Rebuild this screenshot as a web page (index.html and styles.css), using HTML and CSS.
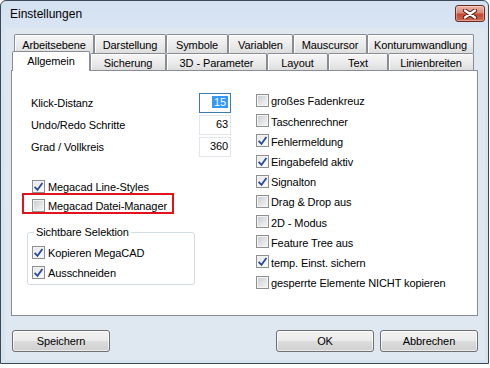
FILE: index.html
```html
<!DOCTYPE html>
<html lang="de">
<head>
<meta charset="utf-8">
<title>Einstellungen</title>
<link rel="stylesheet" href="styles.css">
</head>
<body>
<div class="window">
  <div class="titlebar">
    <span class="title">Einstellungen</span>
    <button class="close" aria-label="Schließen">
      <svg width="16" height="10" viewBox="0 0 16 10"><path d="M3 1.5 L13 8.5 M13 1.5 L3 8.5" stroke="#4a1810" stroke-width="4.2" stroke-linecap="round"/><path d="M3 1.5 L13 8.5 M13 1.5 L3 8.5" stroke="#fff" stroke-width="2.4" stroke-linecap="round"/></svg>
    </button>
  </div>
  <div class="client">
    <div class="tabrow back">
      <div class="tab">Arbeitsebene</div>
      <div class="tab">Darstellung</div>
      <div class="tab">Symbole</div>
      <div class="tab">Variablen</div>
      <div class="tab">Mauscursor</div>
      <div class="tab">Konturumwandlung</div>
    </div>
    <div class="tabrow front">
      <div class="tab active">Allgemein</div>
      <div class="tab">Sicherung</div>
      <div class="tab">3D - Parameter</div>
      <div class="tab">Layout</div>
      <div class="tab">Text</div>
      <div class="tab">Linienbreiten</div>
    </div>
    <div class="panel">
      <div class="left">
        <div class="frow"><span>Klick-Distanz</span><div class="field focus"><span class="sel">15</span></div></div>
        <div class="frow"><span>Undo/Redo Schritte</span><div class="field">63</div></div>
        <div class="frow"><span>Grad / Vollkreis</span><div class="field">360</div></div>
        <div class="cbrow first"><span class="cb on"><svg viewBox="0 0 9 9" width="9" height="9"><path d="M0.6 4.8 L3.5 7.8 L8.4 1" fill="none" stroke="#2b4a9a" stroke-width="1.8"/></svg></span><span class="lbl">Megacad Line-Styles</span></div>
        <div class="redbox"><span class="cb"></span><span class="lbl">Megacad Datei-Manager</span></div>
        <fieldset class="group">
          <legend>Sichtbare Selektion</legend>
          <div class="cbrow"><span class="cb on"><svg viewBox="0 0 9 9" width="9" height="9"><path d="M0.6 4.8 L3.5 7.8 L8.4 1" fill="none" stroke="#2b4a9a" stroke-width="1.8"/></svg></span><span class="lbl">Kopieren MegaCAD</span></div>
          <div class="cbrow"><span class="cb on"><svg viewBox="0 0 9 9" width="9" height="9"><path d="M0.6 4.8 L3.5 7.8 L8.4 1" fill="none" stroke="#2b4a9a" stroke-width="1.8"/></svg></span><span class="lbl">Ausschneiden</span></div>
        </fieldset>
      </div>
      <div class="right">
        <div class="cbrow"><span class="cb"></span><span class="lbl">großes Fadenkreuz</span></div>
        <div class="cbrow"><span class="cb"></span><span class="lbl">Taschenrechner</span></div>
        <div class="cbrow"><span class="cb on"><svg viewBox="0 0 9 9" width="9" height="9"><path d="M0.6 4.8 L3.5 7.8 L8.4 1" fill="none" stroke="#2b4a9a" stroke-width="1.8"/></svg></span><span class="lbl">Fehlermeldung</span></div>
        <div class="cbrow"><span class="cb on"><svg viewBox="0 0 9 9" width="9" height="9"><path d="M0.6 4.8 L3.5 7.8 L8.4 1" fill="none" stroke="#2b4a9a" stroke-width="1.8"/></svg></span><span class="lbl">Eingabefeld aktiv</span></div>
        <div class="cbrow"><span class="cb on"><svg viewBox="0 0 9 9" width="9" height="9"><path d="M0.6 4.8 L3.5 7.8 L8.4 1" fill="none" stroke="#2b4a9a" stroke-width="1.8"/></svg></span><span class="lbl">Signalton</span></div>
        <div class="cbrow"><span class="cb"></span><span class="lbl">Drag &amp; Drop aus</span></div>
        <div class="cbrow"><span class="cb"></span><span class="lbl">2D - Modus</span></div>
        <div class="cbrow"><span class="cb"></span><span class="lbl">Feature Tree aus</span></div>
        <div class="cbrow"><span class="cb on"><svg viewBox="0 0 9 9" width="9" height="9"><path d="M0.6 4.8 L3.5 7.8 L8.4 1" fill="none" stroke="#2b4a9a" stroke-width="1.8"/></svg></span><span class="lbl">temp. Einst. sichern</span></div>
        <div class="cbrow"><span class="cb"></span><span class="lbl">gesperrte Elemente NICHT kopieren</span></div>
      </div>
    </div>
    <div class="buttons">
      <button class="btn save">Speichern</button>
      <button class="btn">OK</button>
      <button class="btn">Abbrechen</button>
    </div>
  </div>
</div>
</body>
</html>
```

FILE: styles.css
```css
* { box-sizing: border-box; }
html, body { margin: 0; padding: 0; background: #fff; }
body {
  font-family: "Liberation Sans", Arial, sans-serif;
  font-size: 11px;
  letter-spacing: -0.1px;
  color: #000;
}
.window {
  width: 489px;
  height: 364px;
  border: 1px solid #3b4857;
  border-radius: 6px 6px 0 0;
  background: linear-gradient(#d3e1f1, #d9e5f3 30px, #d6e2f0);
  display: flex;
  flex-direction: column;
}
.titlebar {
  height: 27px;
  flex: none;
  display: flex;
  justify-content: space-between;
  align-items: flex-start;
  padding: 0 3px 0 9px;
}
.title { font-size: 12px; line-height: 27px; letter-spacing: 0; }
.close {
  margin-top: 4px;
  width: 30px;
  height: 17px;
  padding: 0;
  border: 1px solid #6a2a22;
  border-radius: 3px;
  background: linear-gradient(#eab3a6, #dc8a7a 45%, #c6462f 55%, #cf6a52);
  box-shadow: inset 0 0 0 1px rgba(255,255,255,0.35);
  display: flex;
  align-items: center;
  justify-content: center;
}
.close svg { display: block; }
.client {
  flex: 1;
  margin: 0 3px 3px 4px;
  background: #dfe7f1;
  padding: 6px 7px 8px 6px;
  display: flex;
  flex-direction: column;
}
.tabrow { display: flex; flex: none; }
.tabrow.back { margin-left: 3px; height: 19px; }
.tabrow.front { margin-left: 1px; height: 17px; }
.tab {
  border: 1px solid #898c95;
  border-bottom: none;
  border-radius: 2px 2px 0 0;
  background: linear-gradient(#f6f6f6, #ececec 50%, #dedede);
  box-shadow: inset 1px 1px 0 #fff;
  text-align: center;
  white-space: nowrap;
  line-height: 14px;
}
.back .tab { height: 19px; padding-top: 3px; }
.front .tab { height: 17px; padding-top: 2px; }
.back .tab:nth-child(1) { width: 80px; }
.back .tab:nth-child(2) { width: 72px; }
.back .tab:nth-child(3) { width: 62px; }
.back .tab:nth-child(4) { width: 65px; }
.back .tab:nth-child(5) { width: 74px; }
.back .tab:nth-child(6) { width: 107px; }
.front .tab:nth-child(1) { width: 78px; }
.front .tab:nth-child(2) { width: 76px; }
.front .tab:nth-child(3) { width: 101px; }
.front .tab:nth-child(4) { width: 61px; }
.front .tab:nth-child(5) { width: 60px; }
.front .tab:nth-child(6) { width: 86px; }
.front .tab.active {
  height: 20px;
  margin-top: -2px;
  margin-bottom: -1px;
  background: #fff;
  box-shadow: none;
  position: relative;
  z-index: 1;
}
.panel {
  height: 246px;
  flex: none;
  border: 1px solid #898c95;
  background: #fff;
  display: grid;
  grid-template-columns: 225px 1fr;
  padding-left: 19px;
}
.left { padding-top: 22px; }
.right { padding-top: 19.4px; }
.frow {
  display: grid;
  grid-template-columns: 168px 32px;
  height: 20px;
  margin-bottom: 2px;
  align-items: center;
}
.field {
  height: 20px;
  border: 1px solid #e3e7eb;
  text-align: right;
  padding-right: 2px;
  line-height: 16px;
}
.field.focus { border-color: #3d7bad; }
.sel { background: #3399ff; color: #fff; padding: 0 2px; }
.cbrow {
  display: flex;
  align-items: center;
  gap: 3px;
  height: 20px;
  white-space: nowrap;
}
.left > .cbrow { padding-left: 1px; }
.cbrow.first { margin-top: 19px; }
.right .cbrow { height: 20.2px; gap: 2px; }
.lbl { padding-top: 2px; }
.cb {
  width: 13px;
  height: 13px;
  flex: none;
  border: 1px solid #8e8f8f;
  padding: 1px;
  background: linear-gradient(135deg, #cbcfd4, #f4f4f4) content-box, #f4f4f4;
}
.cb.on { background: linear-gradient(135deg, #e6e8eb, #fbfbfb) content-box, #f4f4f4; }
.cb svg { display: block; overflow: visible; }
.redbox {
  margin: -3px 0 0 -9px;
  width: 152px;
  height: 21px;
  border: 2px solid #e3121d;
  padding: 3px 0 0 8px;
  display: flex;
  align-items: center;
  gap: 3px;
  white-space: nowrap;
}
.group {
  margin: 12px 0 0 -4px;
  width: 168px;
  border: 1px solid #d3dce4;
  border-radius: 3px;
  padding: 3px 0 2px 4px;
  min-width: 0;
}
.group legend {
  padding: 0 2px;
  margin-left: 2px;
  line-height: 13px;
}
.buttons {
  display: flex;
  margin-top: 14px;
  padding-left: 1px;
  gap: 6px;
}
.btn {
  width: 98px;
  height: 22px;
  border: 1px solid #707070;
  border-radius: 3px;
  background: linear-gradient(#f2f2f2, #ebebeb 50%, #dddddd 50%, #cfcfcf);
  box-shadow: inset 0 0 0 1px rgba(255,255,255,0.6);
  font: inherit;
  letter-spacing: inherit;
  line-height: 20px;
  text-align: center;
  padding: 0;
  color: #000;
}
.btn.save { margin-right: auto; }
```
